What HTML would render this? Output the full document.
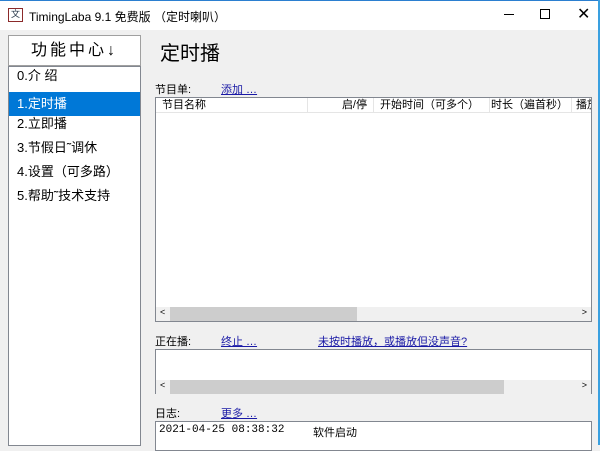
<!DOCTYPE html>
<html><head><meta charset="utf-8"><style>
*{margin:0;padding:0;box-sizing:border-box}
body{width:600px;height:445px;overflow:hidden;background:#f0f0f0;font-family:"Liberation Sans","Noto Sans CJK SC",sans-serif;font-size:12px;color:#000;position:relative}
.abs{position:absolute}
.title{left:0;top:0;width:600px;height:30px;background:#fff;border-top:1px solid #2b7fd0}
.rb{right:0;top:0;width:2px;height:445px;background:#3aa0e0}
.link{color:#1a1aa6;text-decoration:underline}
.box{background:#fff;border:1px solid #828790}
.sb{background:#f0f0f0;height:14px}
.thumb{background:#cdcdcd;height:14px;top:0}
.item{left:9px;width:131px;height:24px;line-height:24px;padding-left:8px;font-size:13px}
.col{top:0;height:15px;border-right:1px solid #e5e5e5;font-size:11px;line-height:15px;white-space:nowrap}
</style></head><body>
<div class="abs title">
 <div class="abs" style="left:8px;top:7px;width:15px;height:14px;border:1px solid #8b2a2a;font-size:9px;line-height:11px;text-align:center;color:#234">文</div>
 <div class="abs" style="left:29px;top:7px;font-size:12px">TimingLaba 9.1 免费版 （定时喇叭）</div>
 <div class="abs" style="left:504px;top:13px;width:10px;height:1px;background:#000"></div>
 <div class="abs" style="left:540px;top:8px;width:10px;height:10px;border:1px solid #000"></div>
 <div class="abs" style="left:577px;top:3px;font-size:16px;font-weight:300">✕</div>
</div>
<div class="abs rb"></div>
<div class="abs" style="left:8px;top:35px;width:133px;height:31px;background:#fff;border:1px solid #a0a0a0;text-align:center;line-height:29px;font-size:16px;letter-spacing:3px">功能中心↓</div>
<div class="abs" style="left:8px;top:66px;width:133px;height:380px;background:#fff;border:1px solid #828790"></div>
<div class="abs item" style="top:64px">0.介 绍</div>
<div class="abs item" style="top:92px;background:#0078d7;color:#fff">1.定时播</div>
<div class="abs item" style="top:112px">2.立即播</div>
<div class="abs item" style="top:136px">3.节假日˜调休</div>
<div class="abs item" style="top:160px">4.设置（可多路）</div>
<div class="abs item" style="top:184px">5.帮助˜技术支持</div>

<div class="abs" style="left:160px;top:37px;font-size:20px">定时播</div>
<div class="abs" style="left:155px;top:81px;font-size:11px">节目单:</div>
<div class="abs link" style="left:221px;top:81px;font-size:11px">添加 …</div>
<div class="abs box" style="left:155px;top:97px;width:437px;height:225px">
 <div class="abs" style="left:0;top:0;width:435px;height:15px;border-bottom:1px solid #e5e5e5"></div>
 <div class="abs col" style="left:0;width:152px;padding-left:6px">节目名称</div>
 <div class="abs col" style="left:152px;width:66px;text-align:right;padding-right:6px">启/停</div>
 <div class="abs col" style="left:218px;width:116px;padding-left:6px">开始时间（可多个）</div>
 <div class="abs col" style="left:334px;width:82px;text-align:right;padding-right:3px">时长（遍首秒）</div>
 <div class="abs col" style="left:416px;width:19px;overflow:hidden;padding-left:4px;border:none">播放</div>
 <div class="abs sb" style="left:0;top:209px;width:435px"><span class="abs" style="left:4px;top:0;font-size:9px">&lt;</span><div class="abs thumb" style="left:14px;width:187px"></div><span class="abs" style="right:4px;top:0;font-size:9px">&gt;</span></div>
</div>
<div class="abs" style="left:155px;top:333px;font-size:11px">正在播:</div>
<div class="abs link" style="left:221px;top:333px;font-size:11px">终止 …</div>
<div class="abs link" style="left:318px;top:333px;font-size:11px">未按时播放，或播放但没声音?</div>
<div class="abs box" style="left:155px;top:349px;width:437px;height:45px">
 <div class="abs sb" style="left:0;top:30px;width:435px"><span class="abs" style="left:4px;top:0;font-size:9px">&lt;</span><div class="abs thumb" style="left:14px;width:334px"></div><span class="abs" style="right:4px;top:0;font-size:9px">&gt;</span></div>
</div>
<div class="abs" style="left:155px;top:405px;font-size:11px">日志:</div>
<div class="abs link" style="left:221px;top:405px;font-size:11px">更多 …</div>
<div class="abs box" style="left:155px;top:421px;width:437px;height:30px">
 <div class="abs" style="left:3px;top:2px;font-size:11px;font-family:'Liberation Mono','Noto Sans CJK SC',monospace">2021-04-25 08:38:32</div>
 <div class="abs" style="left:157px;top:2px;font-size:11px">软件启动</div>
</div>
</body></html>
